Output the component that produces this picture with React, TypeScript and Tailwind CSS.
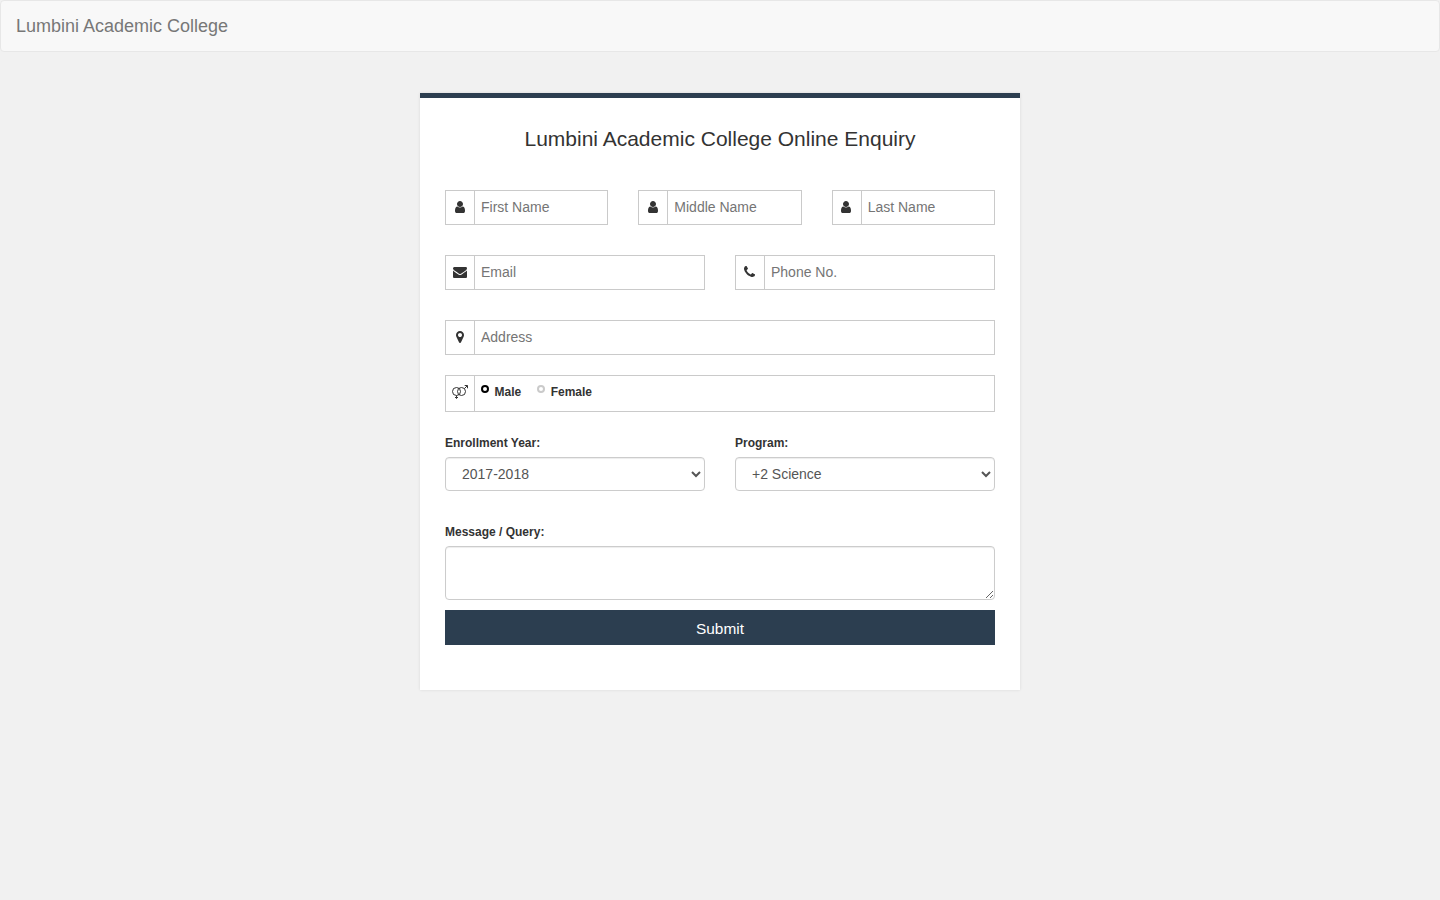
import type { ReactNode } from "react";

const paths = {
  user: "M1536 1399q0 109-62.5 187t-150.5 78h-854q-88 0-150.5-78t-62.5-187q0-85 8.5-160.5t31.5-152 58.5-131 94-89 134.5-34.5q131 128 313 128t313-128q76 0 134.5 34.5t94 89 58.5 131 31.5 152 8.5 160.5zm-256-887q0 159-112.5 271.5t-271.5 112.5-271.5-112.5-112.5-271.5 112.5-271.5 271.5-112.5 271.5 112.5 112.5 271.5z",
  envelope:
    "M1792 710v794q0 66-47 113t-113 47h-1472q-66 0-113-47t-47-113v-794q44 49 101 87 362 246 497 345 57 42 92.5 65.5t94.5 48 110 24.5h2q51 0 110-24.5t94.5-48 92.5-65.5q170-123 498-345 57-39 100-87zm0-294q0 79-49 151t-122 123q-376 261-468 325-10 7-42.5 31t-54 38.5-52 32.5-57.5 27-50 9h-2q-23 0-50-9t-57.5-27-52-32.5-54-38.5-42.5-31q-91-64-262-182.5t-205-142.5q-62-42-117-115.5t-55-136.5q0-78 41.5-130t118.5-52h1472q65 0 112.5 47t47.5 113z",
  phone:
    "M1600 1240q0 27-10 70.5t-21 68.5q-21 50-122 106-94 51-186 51-27 0-53-3.5t-57.5-12.5-47-14.5-55.5-20.5-49-18q-98-35-175-83-127-79-264-216t-216-264q-48-77-83-175-3-9-18-49t-20.5-55.5-14.5-47-12.5-57.5-3.5-53q0-92 51-186 56-101 106-122 25-11 68.5-21t70.5-10q14 0 21 3 18 6 53 76 11 19 30 54t35 63.5 31 53.5q3 4 17.5 25t21.5 35.5 7 28.5q0 20-28.5 50t-62 55-62 53-28.5 46q0 9 5 22.5t8.5 20.5 14 24 11.5 19q76 137 174 235t235 174q2 1 19 11.5t24 14 20.5 8.5 22.5 5q18 0 46-28.5t53-62 55-62 50-28.5q14 0 28.5 7t35.5 21.5 25 17.5q25 15 53.5 31t63.5 35 54 30q70 35 76 53 3 7 3 21z",
  marker:
    "M1152 640q0-106-75-181t-181-75-181 75-75 181 75 181 181 75 181-75 75-181zm256 0q0 109-33 179l-364 774q-16 33-47.5 52t-67.5 19-67.5-19-46.5-52l-365-774q-33-70-33-179 0-212 150-362t362-150 362 150 150 362z",
};

const viewBoxes = {
  user: "0 0 1792 1792",
  envelope: "0 0 1792 1792",
  phone: "64 0 1792 1792",
  marker: "0 0 1792 1792",
};

function Icon({ name }: { name: keyof typeof paths }) {
  return (
    <svg viewBox={viewBoxes[name]} className="size-3.5 shrink-0" fill="currentColor">
      <path d={paths[name]} />
    </svg>
  );
}

function GenderIcon() {
  return (
    <svg viewBox="0 0 16 14" className="mr-px h-3.5 w-4 shrink-0" fill="none" stroke="currentColor" strokeWidth="1">
      <circle cx="4.5" cy="6.5" r="4" />
      <circle cx="9.5" cy="6.5" r="4" />
      <path d="M12.4 3.6 15.2 0.8M12.7 0.5h2.8v2.8M4.5 10.5v3.3M3 12.5h3" />
    </svg>
  );
}

function Addon({ children, nudge }: { children: ReactNode; nudge?: boolean }) {
  return (
    <span
      className={`flex w-[30px] shrink-0 justify-center border border-[#cacaca] pt-[9px] ${nudge ? "pr-px" : ""}`}
    >
      {children}
    </span>
  );
}

function Field({ icon, placeholder, nudge }: { icon: keyof typeof paths; placeholder: string; nudge?: boolean }) {
  return (
    <div className="flex h-[35px]">
      <Addon nudge={nudge}>
        <Icon name={icon} />
      </Addon>
      <input
        placeholder={placeholder}
        className="min-w-0 flex-1 border border-l-0 border-[#cacaca] px-1.5 pb-px text-sm outline-none placeholder:text-[#757575]"
      />
    </div>
  );
}

function Radio({ label, checked }: { label: string; checked?: boolean }) {
  return (
    <label className="flex gap-[5.5px] text-xs font-bold">
      <input
        type="radio"
        name="gender"
        defaultChecked={checked}
        className="mt-[9px] size-2 appearance-none rounded-full border-2 border-[#cacaca] checked:border-black"
      />
      <span className="mt-2 leading-4">{label}</span>
    </label>
  );
}

function Choice({ label, options }: { label: string; options: string[] }) {
  return (
    <label className="block text-xs font-bold">
      <span className="block h-[22px] leading-[17px]">{label}</span>
      <select className="block h-[34px] w-full rounded border border-[#ccc] bg-white px-3 py-1.5 text-sm font-normal text-[#555] shadow-[inset_0_1px_1px_rgba(0,0,0,0.075)]">
        {options.map((o) => (
          <option key={o}>{o}</option>
        ))}
      </select>
    </label>
  );
}

export default function App() {
  return (
    <div className="min-h-screen bg-[#f1f1f1] font-['Liberation_Sans',Arial,sans-serif] text-[#333]">
      <nav className="flex h-[52px] items-center rounded border border-[#e7e7e7] bg-[#f8f8f8] px-[15px] text-lg text-[#777]">
        Lumbini Academic College
      </nav>
      <form className="mx-auto mt-[41px] h-[597px] w-[600px] border-t-5 border-[#2c3e50] bg-white px-[25px] shadow-[0_0_3px_rgba(0,0,0,0.1)]">
        <h1 className="pt-[27px] text-center text-[21px] leading-7">Lumbini Academic College Online Enquiry</h1>
        <div className="mt-[37px] grid grid-cols-3 gap-[30px]">
          <Field icon="user" placeholder="First Name" />
          <Field icon="user" placeholder="Middle Name" />
          <Field icon="user" placeholder="Last Name" nudge />
        </div>
        <div className="mt-[30px] grid grid-cols-2 gap-[30px]">
          <Field icon="envelope" placeholder="Email" />
          <Field icon="phone" placeholder="Phone No." nudge />
        </div>
        <div className="mt-[30px]">
          <Field icon="marker" placeholder="Address" />
        </div>
        <div className="mt-5 flex h-[37px]">
          <Addon>
            <GenderIcon />
          </Addon>
          <div className="flex flex-1 gap-4 border border-l-0 border-[#cacaca] pl-1.5">
            <Radio label="Male" checked />
            <Radio label="Female" />
          </div>
        </div>
        <div className="mt-[23px] grid grid-cols-2 gap-[30px]">
          <Choice label="Enrollment Year:" options={["2017-2018"]} />
          <Choice label="Program:" options={["+2 Science"]} />
        </div>
        <label className="mt-[33px] block text-xs font-bold">
          <span className="block h-[22px] leading-[17px]">Message / Query:</span>
          <textarea className="block h-[54px] w-full rounded border border-[#ccc] bg-white px-3 py-1.5 text-sm font-normal text-[#555] shadow-[inset_0_1px_1px_rgba(0,0,0,0.075)]" />
        </label>
        <button type="button" className="mt-2.5 block h-[35px] w-full bg-[#2c3e50] pt-[3px] text-[15.4px] text-white">
          Submit
        </button>
      </form>
    </div>
  );
}
